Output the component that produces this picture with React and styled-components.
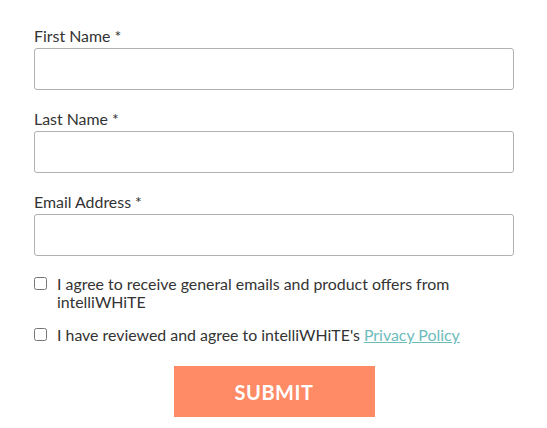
import React from 'react';
import styled, { createGlobalStyle } from 'styled-components';

const GlobalStyle = createGlobalStyle`
  body {
    margin: 0;
    background: #fff;
    font-family: Lato, "Open Sans", sans-serif;
  }
`

const Form = styled.form`
  width: 480px;
  padding: 26px 0 0 34px;
  display: flex;
  flex-direction: column;
`

const Field = styled.div`
  display: flex;
  flex-direction: column;
  margin-bottom: 19px;
`

const Label = styled.label`
  font-size: 15.9px;
  color: #333;
  line-height: 20px;
  margin-bottom: 2px;
`

const Input = styled.input`
  box-sizing: border-box;
  height: 42px;
  width: 480px;
  border: 1px solid #b0b0b0;
  border-radius: 3px;
  background: #fff;
`

const Check = styled.label`
  display: flex;
  align-items: flex-start;
  gap: 10px;
  font-size: 15.9px;
  line-height: 18px;
  color: #333;
  margin-bottom: ${p => p.gap}px;
`

const Box = styled.input`
  width: 13px;
  height: 13px;
  margin: 2px 0 0 0;
  flex-shrink: 0;
`

const Link = styled.a`
  color: #6cbcbc;
  text-decoration: underline;
`

const Submit = styled.button`
  align-self: center;
  width: 201px;
  height: 51px;
  border: none;
  background: #ff8a66;
  color: #fff;
  font-family: Lato, sans-serif;
  font-weight: 700;
  font-size: 20px;
  letter-spacing: 0.5px;
`

export default function App() {
  return (
    <>
      <GlobalStyle />
      <Form>
        <Field>
          <Label>First Name *</Label>
          <Input />
        </Field>
        <Field>
          <Label>Last Name *</Label>
          <Input />
        </Field>
        <Field>
          <Label>Email Address *</Label>
          <Input />
        </Field>
        <Check gap={15}>
          <Box type="checkbox" />
          <span>I agree to receive general emails and product offers from<br />intelliWHiTE</span>
        </Check>
        <Check gap={22}>
          <Box type="checkbox" />
          <span>I have reviewed and agree to intelliWHiTE's <Link href="#">Privacy Policy</Link></span>
        </Check>
        <Submit type="button">SUBMIT</Submit>
      </Form>
    </>
  )
}
